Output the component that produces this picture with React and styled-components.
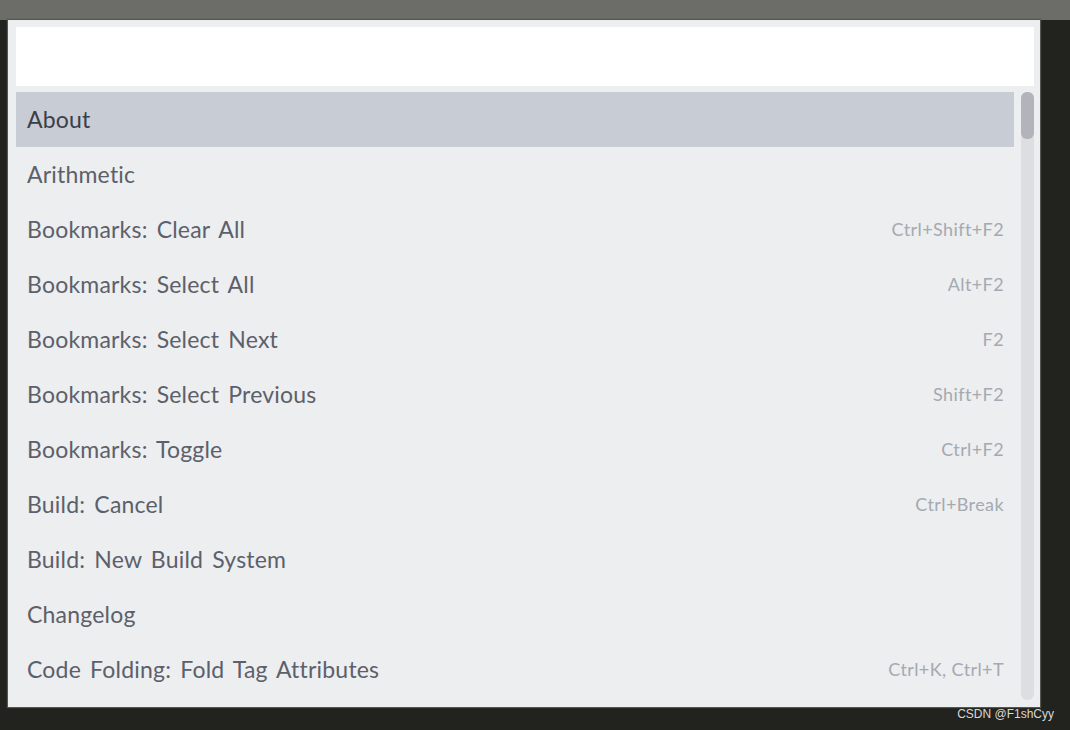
import React from "react";
import styled, { createGlobalStyle } from "styled-components";

const GlobalStyle = createGlobalStyle`
  html, body {
    margin: 0;
    padding: 0;
    background: #22231e;
    font-family: Lato, "Noto Sans", sans-serif;
  }
`;

const commands = [
  { name: "About", keys: "", active: true },
  { name: "Arithmetic", keys: "" },
  { name: "Bookmarks: Clear All", keys: "Ctrl+Shift+F2" },
  { name: "Bookmarks: Select All", keys: "Alt+F2" },
  { name: "Bookmarks: Select Next", keys: "F2" },
  { name: "Bookmarks: Select Previous", keys: "Shift+F2" },
  { name: "Bookmarks: Toggle", keys: "Ctrl+F2" },
  { name: "Build: Cancel", keys: "Ctrl+Break" },
  { name: "Build: New Build System", keys: "" },
  { name: "Changelog", keys: "" },
  { name: "Code Folding: Fold Tag Attributes", keys: "Ctrl+K, Ctrl+T" },
];

const App = () => {
  return (
    <Screen>
      <GlobalStyle />
      <TopBar />
      <Middle>
        <Palette>
          <Search />
          <ListArea>
            <List>
              {commands.map((c) => (
                <Row key={c.name} $active={c.active}>
                  <Name $active={c.active}>{c.name}</Name>
                  <Keys>{c.keys}</Keys>
                </Row>
              ))}
            </List>
            <ScrollTrack>
              <Thumb />
            </ScrollTrack>
          </ListArea>
        </Palette>
      </Middle>
      <Footer>
        <Mark>CSDN @F1shCyy</Mark>
      </Footer>
    </Screen>
  );
};

export default App;

const Screen = styled.div`
  width: 1070px;
  height: 730px;
  display: flex;
  flex-direction: column;
  background: #22231e;
  overflow: hidden;
`;

const TopBar = styled.div`
  height: 20px;
  background: #6c6d68;
  flex-shrink: 0;
`;

const Middle = styled.div`
  display: flex;
  padding-left: 8px;
`;

const Palette = styled.div`
  width: 1032px;
  height: 687px;
  background: #eceef0;
  box-sizing: border-box;
  padding: 7px 6px 0 8px;
  display: flex;
  flex-direction: column;
  gap: 6px;
  box-shadow: 0 0 1px 1px #55564f;
`;

const Search = styled.div`
  height: 59px;
  background: #ffffff;
  flex-shrink: 0;
`;

const ListArea = styled.div`
  display: flex;
  gap: 7px;
`;

const List = styled.div`
  flex: 1;
  display: flex;
  flex-direction: column;
`;

const Row = styled.div`
  height: 55px;
  display: flex;
  align-items: center;
  justify-content: space-between;
  padding: 0 10px 2px 11px;
  box-sizing: border-box;
  background: ${(p) => (p.$active ? "#c8ccd4" : "transparent")};
`;

const Name = styled.span`
  font-size: 23px;
  letter-spacing: 0.2px;
  word-spacing: 3px;
  color: ${(p) => (p.$active ? "#3b3e48" : "#5c606a")};
`;

const Keys = styled.span`
  font-size: 18px;
  letter-spacing: 0.4px;
  color: #a5a9b1;
`;

const ScrollTrack = styled.div`
  width: 13px;
  height: 608px;
  background: #dcdee2;
  border-radius: 6px;
  flex-shrink: 0;
`;

const Thumb = styled.div`
  height: 47px;
  background: #b1b4ba;
  border-radius: 6px;
`;

const Footer = styled.div`
  flex: 1;
  display: flex;
  justify-content: flex-end;
  align-items: flex-start;
  padding-right: 16px;
`;

const Mark = styled.span`
  font-family: "Liberation Sans", Arial, sans-serif;
  font-size: 12px;
  line-height: 14px;
  color: #d8d8d8;
`;
